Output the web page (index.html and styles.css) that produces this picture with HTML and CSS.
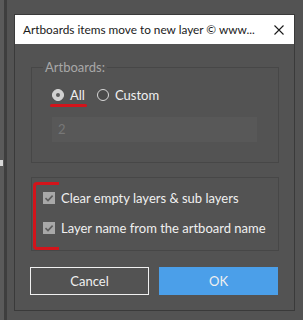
FILE: index.html
```html
<!DOCTYPE html>
<html lang="en">
  <head>
    <meta charset="UTF-8" />
    <meta name="viewport" content="width=device-width, initial-scale=1.0" />
    <title>Artboards items move to new layer</title>
    <link rel="stylesheet" href="styles.css">
  </head>
  <body>
    <div class="desk">
      <div class="side">
        <div class="side_light"><span class="side_arrow"></span></div>
        <div class="side_line"></div>
        <div class="side_mid"></div>
      </div>

      <div class="dialog">
        <div class="titlebar">
          <span class="titlebar_text">Artboards items move to new layer © www...</span>
          <svg class="titlebar_close" width="10" height="10" viewBox="0 0 10 10">
            <path d="M0.5 0.5 L9.5 9.5 M9.5 0.5 L0.5 9.5" stroke="#1a1a1a" stroke-width="1.1" fill="none" />
          </svg>
        </div>

        <div class="dialog_body">
          <fieldset class="group group-artboards">
            <legend>Artboards:</legend>
            <div class="radios">
              <label class="radio checked"><span class="radio_dot"></span>All</label>
              <label class="radio"><span class="radio_dot"></span>Custom</label>
              <span class="mark-underline"></span>
            </div>
            <div class="field">2</div>
          </fieldset>

          <div class="group group-options">
            <label class="check"><span class="check_box"><svg width="12" height="12" viewBox="0 0 12 12"><path d="M2.5 6.2 L5 8.6 L9.6 3.6" stroke="#5c5c5c" stroke-width="1.6" fill="none" /></svg></span>Clear empty layers &amp; sub layers</label>
            <label class="check"><span class="check_box"><svg width="12" height="12" viewBox="0 0 12 12"><path d="M2.5 6.2 L5 8.6 L9.6 3.6" stroke="#5c5c5c" stroke-width="1.6" fill="none" /></svg></span>Layer name from the artboard name</label>
            <span class="mark-bracket"></span>
          </div>

          <div class="buttons">
            <button class="btn btn-cancel">Cancel</button>
            <button class="btn btn-ok">OK</button>
          </div>
        </div>
      </div>
    </div>
  </body>
</html>
```

FILE: styles.css
```css
* {
  box-sizing: border-box;
}

body {
  margin: 0;
  background: #535353;
  font-family: Lato, "Noto Sans", sans-serif;
  font-size: 13px;
  color: #e8e8e8;
  white-space: nowrap;
}

.desk {
  display: flex;
  height: 320px;
  padding-top: 14px;
}

/* left edge of the app behind the dialog */
.side {
  display: flex;
  width: 14px;
  margin-top: -14px;
}

.side_light {
  position: relative;
  width: 4px;
  background: #5a5a5a;
}

.side_arrow {
  position: absolute;
  left: 0;
  top: 160px;
  width: 3px;
  height: 6px;
  background: #d8d8d8;
}

.side_line {
  width: 3px;
  background: #3e3e3e;
}

.side_mid {
  width: 7px;
  background: #535353;
}

.dialog {
  width: 281px;
  height: 297px;
  border: 1px solid #3a3a3a;
  background: #535353;
  display: flex;
  flex-direction: column;
}

.titlebar {
  display: flex;
  align-items: center;
  justify-content: space-between;
  height: 29px;
  padding: 0 10px 0 8px;
  background: #ffffff;
  color: #1a1a1a;
}

.titlebar_text {
  font-size: 11.8px;
}

.dialog_body {
  padding: 15px 16px 0 16px;
}

.group {
  border: 1px solid #474747;
  margin: 0;
  width: 248px;
}

.group-artboards {
  padding: 10px 20px 20px 20px;
  height: 104px;
}

.group-artboards legend {
  margin-left: -9px;
  padding: 0 2px;
  color: #a8a8a8;
}

.radios {
  position: relative;
  display: flex;
  gap: 12px;
  height: 20px;
  align-items: center;
}

.radio {
  display: flex;
  align-items: center;
  gap: 6px;
  color: #f0f0f0;
}

.radio_dot {
  width: 12px;
  height: 12px;
  border-radius: 50%;
  border: 1px solid #d8d8d8;
  background: #4a4a4a;
  display: flex;
  align-items: center;
  justify-content: center;
}

.radio.checked .radio_dot {
  background: #d0d0d0;
}

.radio.checked .radio_dot::after {
  content: "";
  width: 4px;
  height: 4px;
  border-radius: 50%;
  background: #5c5c5c;
}

/* red annotation marks */
.mark-underline {
  position: absolute;
  left: -2px;
  top: 19px;
  width: 37px;
  height: 3px;
  border-radius: 2px;
  background: #d3141b;
}

.field {
  margin-top: 12px;
  width: 205px;
  height: 25px;
  padding: 4px 6px;
  background: #585858;
  color: #777777;
}

.group-options {
  position: relative;
  margin-top: 14px;
  height: 74px;
  padding: 11px 11px;
  display: flex;
  flex-direction: column;
  gap: 12px;
}

.check {
  display: flex;
  align-items: center;
  gap: 6px;
  color: #f0f0f0;
  height: 18px;
}

.check_box {
  width: 12px;
  height: 12px;
  background: #a8a8a8;
  display: flex;
}

.mark-bracket {
  position: absolute;
  left: 1px;
  top: 4px;
  width: 26px;
  height: 68px;
  border: 3px solid #d3141b;
  border-right: none;
  border-radius: 4px 0 0 4px;
}

.buttons {
  display: flex;
  gap: 10px;
  margin-top: 16px;
  margin-left: -1px;
}

.btn {
  width: 120px;
  height: 28px;
  font-family: inherit;
  font-size: 13px;
  color: #f0f0f0;
  cursor: pointer;
}

.btn-cancel {
  background: #535353;
  border: 1px solid #f0f0f0;
}

.btn-ok {
  background: #4b9fe9;
  border: none;
}
```
